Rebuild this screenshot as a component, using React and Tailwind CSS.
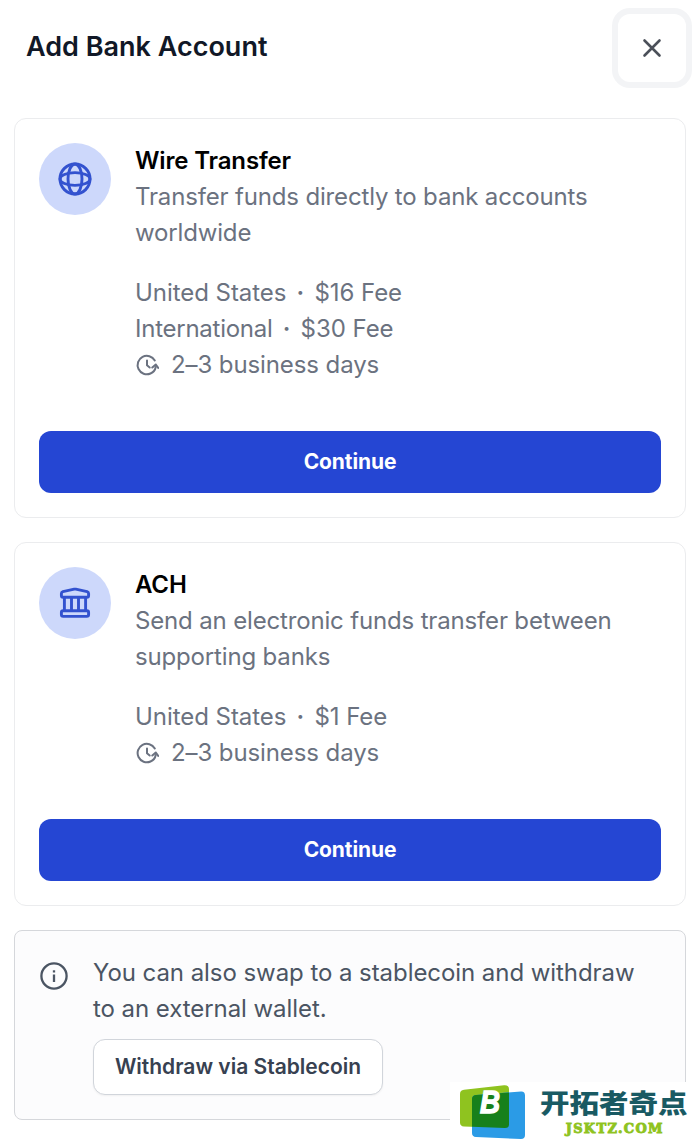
const strokeProps = {
  fill: 'none',
  stroke: 'currentColor',
  strokeLinecap: 'round',
  strokeLinejoin: 'round',
};

function GlobeIcon() {
  return (
    <svg className="size-9" viewBox="0 0 36 36" strokeWidth="2.9" {...strokeProps}>
      <circle cx="18" cy="18" r="15" />
      <ellipse cx="18" cy="18" rx="7" ry="15" />
      <ellipse cx="18" cy="18" rx="15" ry="6.4" />
    </svg>
  );
}

function BankIcon() {
  return (
    <svg className="size-9" viewBox="0 0 36 36" strokeWidth="2.9" {...strokeProps}>
      <path d="M4.4 8.6c0-1 .6-1.600 1.500-1.900L17.200 4.200c.5-.1 1.100-.1 1.600 0L30.100 6.700c.9.300 1.500.9 1.500 1.900v1.900c0 1-.8 1.800-1.800 1.800H6.200c-1 0-1.800-.8-1.800-1.800z" />
      <rect x="4.4" y="25.8" width="27.200" height="5.600" rx="1.8" />
      <path d="M7.4 12.500v13M14.500 12.500v13M21.500 12.500v13M28.600 12.500v13" />
    </svg>
  );
}

function ClockIcon() {
  return (
    <svg className="size-6" viewBox="0 0 24 24" strokeWidth="2" {...strokeProps}>
      <path d="M19.800 7.500A9.200 9.200 0 1 0 15.500 20.500c3-1.200 4.700-3.500 5.200-6.500" />
      <path d="M17.300 14.500l3.500-3 2.400 3.400" />
      <path d="M12 7.500v4.800l2.700 2.200" />
    </svg>
  );
}

function InfoIcon() {
  return (
    <svg className="size-7" viewBox="0 0 28 28" strokeWidth="2.300" {...strokeProps}>
      <circle cx="14" cy="14" r="12.600" />
      <path d="M14 12.500v7.500" strokeLinecap="butt" />
      <path d="M14 8.300v2.200" strokeLinecap="butt" />
    </svg>
  );
}

function TransferCard({ icon, title, description, fees }) {
  return (
    <section className="rounded-xl border border-[#ebecee] bg-white p-6">
      <div className="flex gap-6">
        <div className="flex size-18 shrink-0 items-center justify-center rounded-full bg-[#cdd8fb] text-[#3352cf]">
          {icon}
        </div>
        <div className="leading-9 text-[#6b7280]">
          <h2 className="text-[24px] font-semibold tracking-[-0.15px] text-black">{title}</h2>
          <p className="w-[500px] tracking-[-0.16px]">{description}</p>
          <div className="mt-6 tracking-[-0.05px]">
            {fees.map((fee) => (
              <div key={fee.region} className="flex">
                <span className={fee.region === 'International' ? 'tracking-[-0.25px]' : ''}>
                  {fee.region}
                </span>
                <span className="w-7 text-center font-semibold">·</span>
                <span>{fee.amount} Fee</span>
              </div>
            ))}
            <div className="flex items-center gap-3 tracking-[-0.1px]">
              <ClockIcon />
              <span>2–3 business days</span>
            </div>
          </div>
        </div>
      </div>
      <button className="mt-12 block h-[62px] w-full rounded-xl bg-[#2546d3] text-[21px] font-bold tracking-[-0.1px] text-white">
        Continue
      </button>
    </section>
  );
}

function Watermark() {
  return (
    <div className="absolute right-0 bottom-0 flex h-[60px] w-[250px] bg-white">
      <svg className="ml-2.5 h-[60px] w-[68px] shrink-0" viewBox="0 0 68 60">
        <path d="M4 7.800 44 3.200q5-.4 5 4V42.500q0 3.500-4 3.500L4 44.500q-4-.3-4-4V12q0-3.800 4-4.200z" fill="#8fc31f" />
        <path d="M16 13l45-3.500q4-.2 4 4V53q0 4-4 4L16 55q-4-.3-4-4V17q0-3.700 4-4z" fill="#2b9be6" />
        <path d="M16 13l33-2.600V42.500q0 3.500-4 3.500L12 44.700V17q0-3.700 4-4z" fill="#17801b" />
        <text x="20" y="30.500" fill="#fff" stroke="#fff" strokeWidth="1.400" fontFamily="Liberation Sans, sans-serif" fontSize="31" fontWeight="700" fontStyle="italic" textLength="20" lengthAdjust="spacingAndGlyphs">
          B
        </text>
      </svg>
      <div className="ml-3 flex flex-col items-center">
        <span className="mt-0.5 h-[37px] scale-y-88 text-[29.500px] leading-[37px] font-black tracking-normal whitespace-nowrap text-[#195a63] [font-family:'Noto_Sans_CJK_SC',sans-serif]">
          开拓者奇点
        </span>
        <span className="ml-0.5 text-[13px] leading-[15px] font-bold tracking-[1.300px] text-[#8fc31f] [-webkit-text-stroke:0.900px_#8fc31f] [font-family:'DejaVu_Serif',serif]">
          JSKTZ.COM
        </span>
      </div>
    </div>
  );
}

export default function App() {
  return (
    <div className="relative h-[1142px] w-[700px] overflow-hidden bg-white text-[24px] tracking-[-0.06px] [font-family:Inter,sans-serif]">
      <header className="flex h-[94px] items-start justify-between pt-2 pr-2 pl-[26px]">
        <h1 className="mt-[21px] text-[27px] leading-9 font-semibold tracking-normal text-[#111827]">
          Add Bank Account
        </h1>
        <button
          aria-label="Close"
          className="flex size-20 items-center justify-center rounded-[18px] border-[6px] border-[#f3f4f6] bg-white text-[#4b5059]"
        >
          <svg className="size-5" viewBox="0 0 20 20" strokeWidth="2.600" {...strokeProps}>
            <path d="M2.500 2.500l15 15M17.500 2.500l-15 15" />
          </svg>
        </button>
      </header>

      <main className="flex flex-col gap-6 px-3.5 pt-6">
        <TransferCard
          icon={<GlobeIcon />}
          title="Wire Transfer"
          description="Transfer funds directly to bank accounts worldwide"
          fees={[
            { region: 'United States', amount: '$16' },
            { region: 'International', amount: '$30' },
          ]}
        />
        <TransferCard
          icon={<BankIcon />}
          title="ACH"
          description="Send an electronic funds transfer between supporting banks"
          fees={[{ region: 'United States', amount: '$1' }]}
        />

        <section className="flex gap-[25px] rounded-lg border border-[#d5d7db] bg-[#fcfcfd] p-6 pl-[25px] text-[#4b5563]">
          <div className="mt-[7px]">
            <InfoIcon />
          </div>
          <div>
            <p className="w-[560px] leading-9">
              You can also swap to a stablecoin and withdraw to an external wallet.
            </p>
            <button className="mt-3 block h-14 w-[290px] rounded-xl border border-[#d1d5db] bg-white text-[21px] font-semibold tracking-normal text-[#374151] shadow-xs">
              Withdraw via Stablecoin
            </button>
          </div>
        </section>
      </main>

      <Watermark />
    </div>
  );
}
